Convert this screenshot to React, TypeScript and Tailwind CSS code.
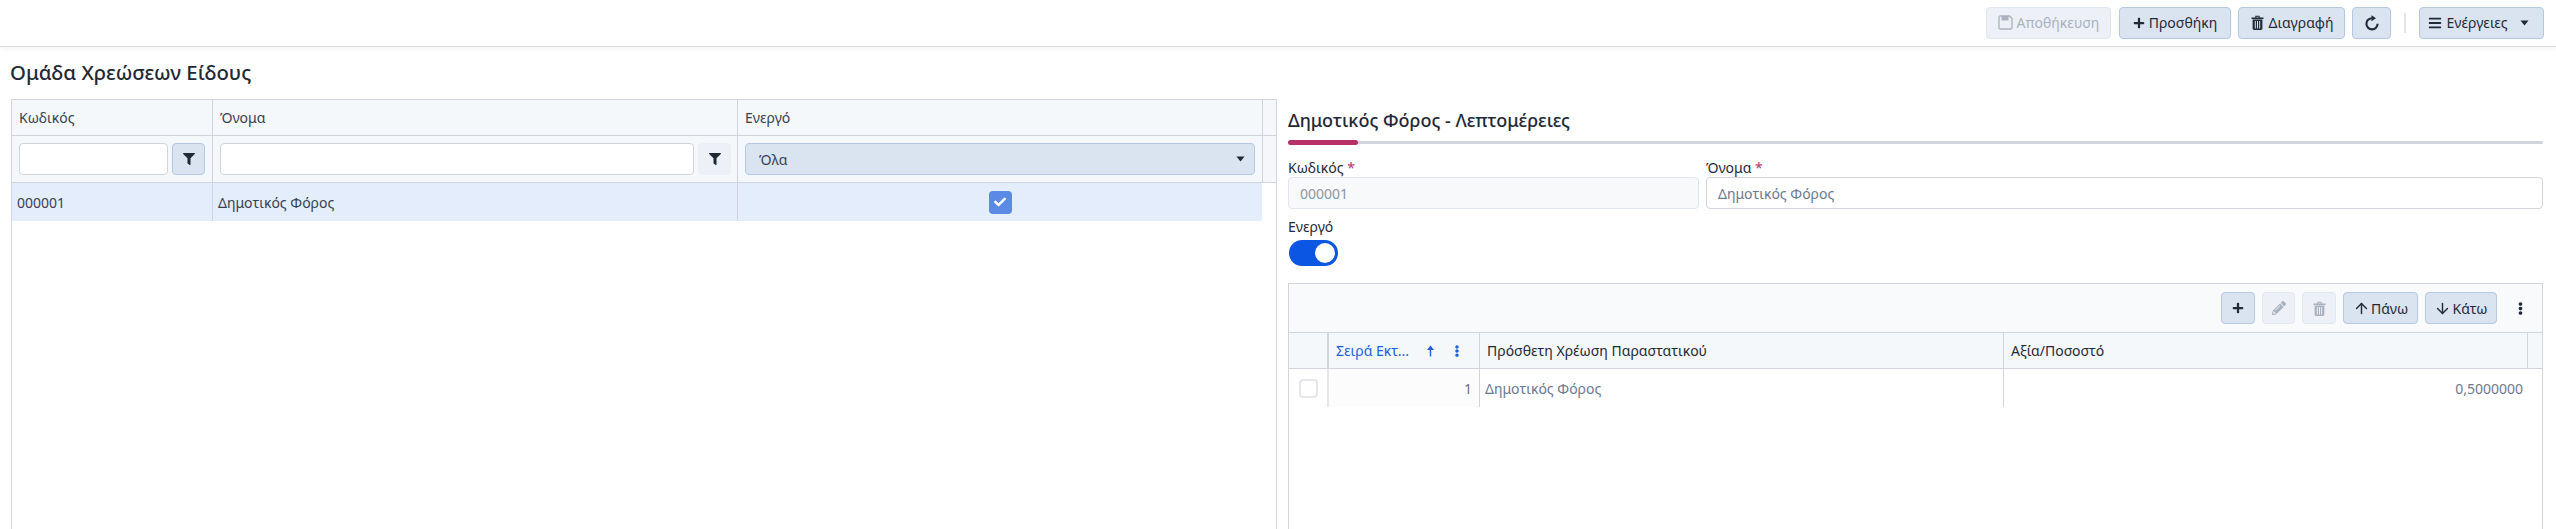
import { useState } from "react";
import { FaCheck, FaFilter, FaPlus, FaBars, FaEllipsisV, FaPencilAlt } from "react-icons/fa";
import { ArrowUp, ArrowDown } from "lucide-react";

function Caret({ className = "" }: { className?: string }) {
  return (
    <svg width="9" height="6" viewBox="0 0 9 6" className={className}>
      <path d="M0.5 0.5h8L4.5 5.5z" fill="currentColor" />
    </svg>
  );
}

function SaveIcon() {
  return (
    <svg width="15" height="15" viewBox="0 0 15 15" fill="none">
      <path d="M1 2.2C1 1.5 1.5 1 2.2 1h9.3L14 3.5v9.3c0 .7-.5 1.2-1.2 1.2H2.2C1.5 14 1 13.5 1 12.8z" stroke="currentColor" strokeWidth="1.3" />
      <path d="M3.5 1h7v4.5h-7z" fill="currentColor" />
    </svg>
  );
}

function TrashIcon({ size = 15 }: { size?: number }) {
  return (
    <svg width={size} height={size} viewBox="0 0 15 15" fill="currentColor">
      <path d="M1.5 2.5h12v1.4h-12zM5.3 2.6V.8h4.4v1.8H8.6V1.8H6.4v.8z" />
      <path fillRule="evenodd" d="M2.6 4.6h9.8v8.9c0 .8-.6 1.4-1.4 1.4H4c-.8 0-1.4-.6-1.4-1.4zM4.8 6v7.4h1V6zm2.2 0v7.4h1V6zm2.2 0v7.4h1V6z" />
    </svg>
  );
}

function RefreshIcon() {
  return (
    <svg width="16" height="16" viewBox="0 0 16 16" fill="none">
      <path d="M7.6 3.2A5.6 5.6 0 1 0 13.6 8.8" stroke="currentColor" strokeWidth="2.1" />
      <path d="M7.4 0.2L12 3.2L7.4 6.2z" fill="currentColor" />
    </svg>
  );
}

function SortArrow() {
  return (
    <svg width="9" height="12" viewBox="0 0 9 12" className="ml-[17px]">
      <path d="M4.5 0.5L8 5H5.2v6.5H3.8V5H1z" fill="currentColor" />
    </svg>
  );
}

function ToolButton({ disabled, children, className = "" }: { disabled?: boolean; children: React.ReactNode; className?: string }) {
  return (
    <button
      className={
        "flex h-8 items-center justify-center gap-1 rounded-[4px] border text-[14px] " +
        (disabled
          ? "border-[#dfe7f3] bg-[#edf1f7] text-[#a9b2be] "
          : "border-[#b4c8e4] bg-[#dae3f0] text-[#1f2a37] ") +
        className
      }
    >
      {children}
    </button>
  );
}

function LeftTable() {
  return (
    <div className="flex w-[1266px] shrink-0 flex-col border-x border-t border-[#d1d5db] text-[14px] text-[#374151]">
      <div className="grid h-[36px] grid-cols-[201px_525px_525px_1fr] border-b border-[#d1d5db] bg-[#f4f8fb]">
        <div className="flex items-center border-r border-[#d1d5db] pl-[7px]">Κωδικός</div>
        <div className="flex items-center border-r border-[#d1d5db] pl-[7px]">Όνομα</div>
        <div className="flex items-center border-r border-[#d1d5db] pl-[7px]">Ενεργό</div>
        <div />
      </div>
      <div className="grid h-[47px] grid-cols-[201px_525px_525px_1fr] border-b border-[#d1d5db] bg-[#f4f8fb]">
        <div className="flex items-center gap-[4px] border-r border-[#d1d5db] pl-[7px]">
          <input className="h-8 w-[149px] rounded-[4px] border border-[#d1d5db] bg-white" />
          <button className="flex h-8 w-[33px] items-center justify-center rounded-[4px] border border-[#b4c8e4] bg-[#dae3f0] text-[#1f2a37]">
            <FaFilter size={12} />
          </button>
        </div>
        <div className="flex items-center gap-[4px] border-r border-[#d1d5db] pl-[7px]">
          <input className="h-8 w-[474px] rounded-[4px] border border-[#d1d5db] bg-white" />
          <button className="flex h-8 w-[33px] items-center justify-center rounded-[4px] bg-[#edf1f7] text-[#1f2a37]">
            <FaFilter size={12} />
          </button>
        </div>
        <div className="flex items-center border-r border-[#d1d5db] pl-[7px]">
          <div className="flex h-8 w-[510px] items-center justify-between rounded-[4px] border border-[#b4c8e4] bg-[#dae3f0] pl-[13px] pr-[9px]">
            <span>Όλα</span>
            <Caret className="text-[#1f2a37]" />
          </div>
        </div>
        <div />
      </div>
      <div className="grid h-[38px] w-[1250px] grid-cols-[201px_525px_1fr] bg-[#e3edfc]">
        <div className="flex items-center border-r border-[#d1d5db] pl-[5px]">000001</div>
        <div className="flex items-center border-r border-[#d1d5db] pl-[5px]">Δημοτικός Φόρος</div>
        <div className="flex items-center justify-center">
          <span className="flex h-[23px] w-[23px] items-center justify-center rounded-[4px] bg-[#5a8ae4] text-white">
            <FaCheck size={12} />
          </span>
        </div>
      </div>
    </div>
  );
}

function DetailPanel() {
  const [active, setActive] = useState(true);
  return (
    <div className="flex min-w-0 flex-1 flex-col pl-[11px] pr-[13px] text-[14px] text-[#1f2937]">
      <h2 className="mt-[9px] text-[18px] font-medium leading-[24px] text-[#1f2937]">Δημοτικός Φόρος - Λεπτομέρειες</h2>
      <div className="mt-[9px] h-[3px] rounded-full bg-[#d1d5db]">
        <div className="h-[5px] w-[70px] -translate-y-px rounded-full bg-[#b8306a]" />
      </div>
      <div className="mt-[15px] grid grid-cols-[411px_1fr] gap-x-[7px]">
        <div>
          <label className="block leading-[18px]">
            Κωδικός <span className="text-[#b8306a]">*</span>
          </label>
          <div className="flex h-8 items-center rounded-[4px] border border-[#e1e6ee] bg-[#f7f9fb] pl-[11px] text-[#8b95a3]">000001</div>
        </div>
        <div>
          <label className="block leading-[18px]">
            Όνομα <span className="text-[#b8306a]">*</span>
          </label>
          <div className="flex h-8 items-center rounded-[4px] border border-[#d1d5db] bg-white pl-[11px] text-[#6b7a90]">Δημοτικός Φόρος</div>
        </div>
      </div>
      <div className="mt-[9px] leading-[18px]">Ενεργό</div>
      <button
        onClick={() => setActive(!active)}
        className="ml-px mt-[4px] flex h-[26px] w-[49px] items-center justify-end rounded-full bg-[#0b57e3] pr-[3px]"
      >
        <span className="h-[20px] w-[20px] rounded-full bg-white" />
      </button>
      <div className="mt-[17px] flex flex-1 flex-col border-x border-t border-[#d1d5db]">
        <div className="flex h-[49px] items-center justify-end gap-[7px] border-b border-[#d1d5db] bg-[#f8fafc] pr-[6px]">
          <ToolButton className="w-[34px]"><FaPlus size={12} /></ToolButton>
          <ToolButton disabled className="w-[33px]"><FaPencilAlt size={14} /></ToolButton>
          <ToolButton disabled className="w-[34px]"><TrashIcon /></ToolButton>
          <ToolButton className="w-[75px] gap-[1px]"><ArrowUp size={17} strokeWidth={2} />Πάνω</ToolButton>
          <ToolButton className="w-[72px] gap-[1px]"><ArrowDown size={17} strokeWidth={2} />Κάτω</ToolButton>
          <span className="flex w-[32px] justify-center"><FaEllipsisV size={13} /></span>
        </div>
        <div className="grid h-[36px] grid-cols-[40px_151px_524px_1fr_14px] border-b border-[#d1d5db] bg-[#f4f8fb]">
          <div className="border-r-2 border-[#d1d5db]" />
          <div className="flex items-center border-r border-[#d1d5db] pl-[7px] text-[#1d5fe0]">
            <span>Σειρά Εκτ...</span>
            <SortArrow />
            <FaEllipsisV size={12} className="ml-[16px]" />
          </div>
          <div className="flex items-center border-r border-[#d1d5db] pl-[7px]">Πρόσθετη Χρέωση Παραστατικού</div>
          <div className="flex items-center border-r border-[#d1d5db] pl-[7px]">Αξία/Ποσοστό</div>
          <div />
        </div>
        <div className="grid h-[38px] grid-cols-[40px_151px_524px_1fr] text-[#6b7a90]">
          <div className="flex items-center justify-center border-r-2 border-[#e5e7eb]">
            <span className="h-[19px] w-[19px] rounded-[4px] border-2 border-[#e5e7eb] bg-white" />
          </div>
          <div className="flex items-center justify-end border-r border-[#d1d5db] bg-[#fcfcfc] pr-[7px] text-[#6b7280]">1</div>
          <div className="flex items-center border-r border-[#d1d5db] pl-[5px]">Δημοτικός Φόρος</div>
          <div className="flex items-center justify-end pr-[19px]">0,5000000</div>
        </div>
      </div>
    </div>
  );
}

export default function App() {
  return (
    <div className="flex h-screen flex-col overflow-hidden bg-white font-['Noto_Sans',sans-serif]">
      <header className="flex h-[47px] shrink-0 items-center justify-end gap-[7px] border-b border-[#d9dadc] pb-[1px] pr-[12px] shadow-[0_2px_6px_rgba(0,0,0,0.05)]">
        <ToolButton disabled className="w-[125px]"><SaveIcon />Αποθήκευση</ToolButton>
        <ToolButton className="ml-[1px] w-[112px]"><FaPlus size={12} />Προσθήκη</ToolButton>
        <ToolButton className="w-[107px]"><TrashIcon />Διαγραφή</ToolButton>
        <ToolButton className="w-[39px]"><RefreshIcon /></ToolButton>
        <span className="mx-[6px] h-[20px] w-[2px] bg-[#e3e5e8]" />
        <ToolButton className="w-[125px] pr-[6px]">
          <FaBars size={14} />Ενέργειες<Caret className="ml-[8px]" />
        </ToolButton>
      </header>
      <h1 className="flex h-[51px] shrink-0 items-center pl-[10px] pb-[1px] text-[20.3px] font-medium text-[#1f2937]">Ομάδα Χρεώσεων Είδους</h1>
      <div className="mt-[1px] flex min-h-0 flex-1 pl-[11px]">
        <LeftTable />
        <DetailPanel />
      </div>
    </div>
  );
}
